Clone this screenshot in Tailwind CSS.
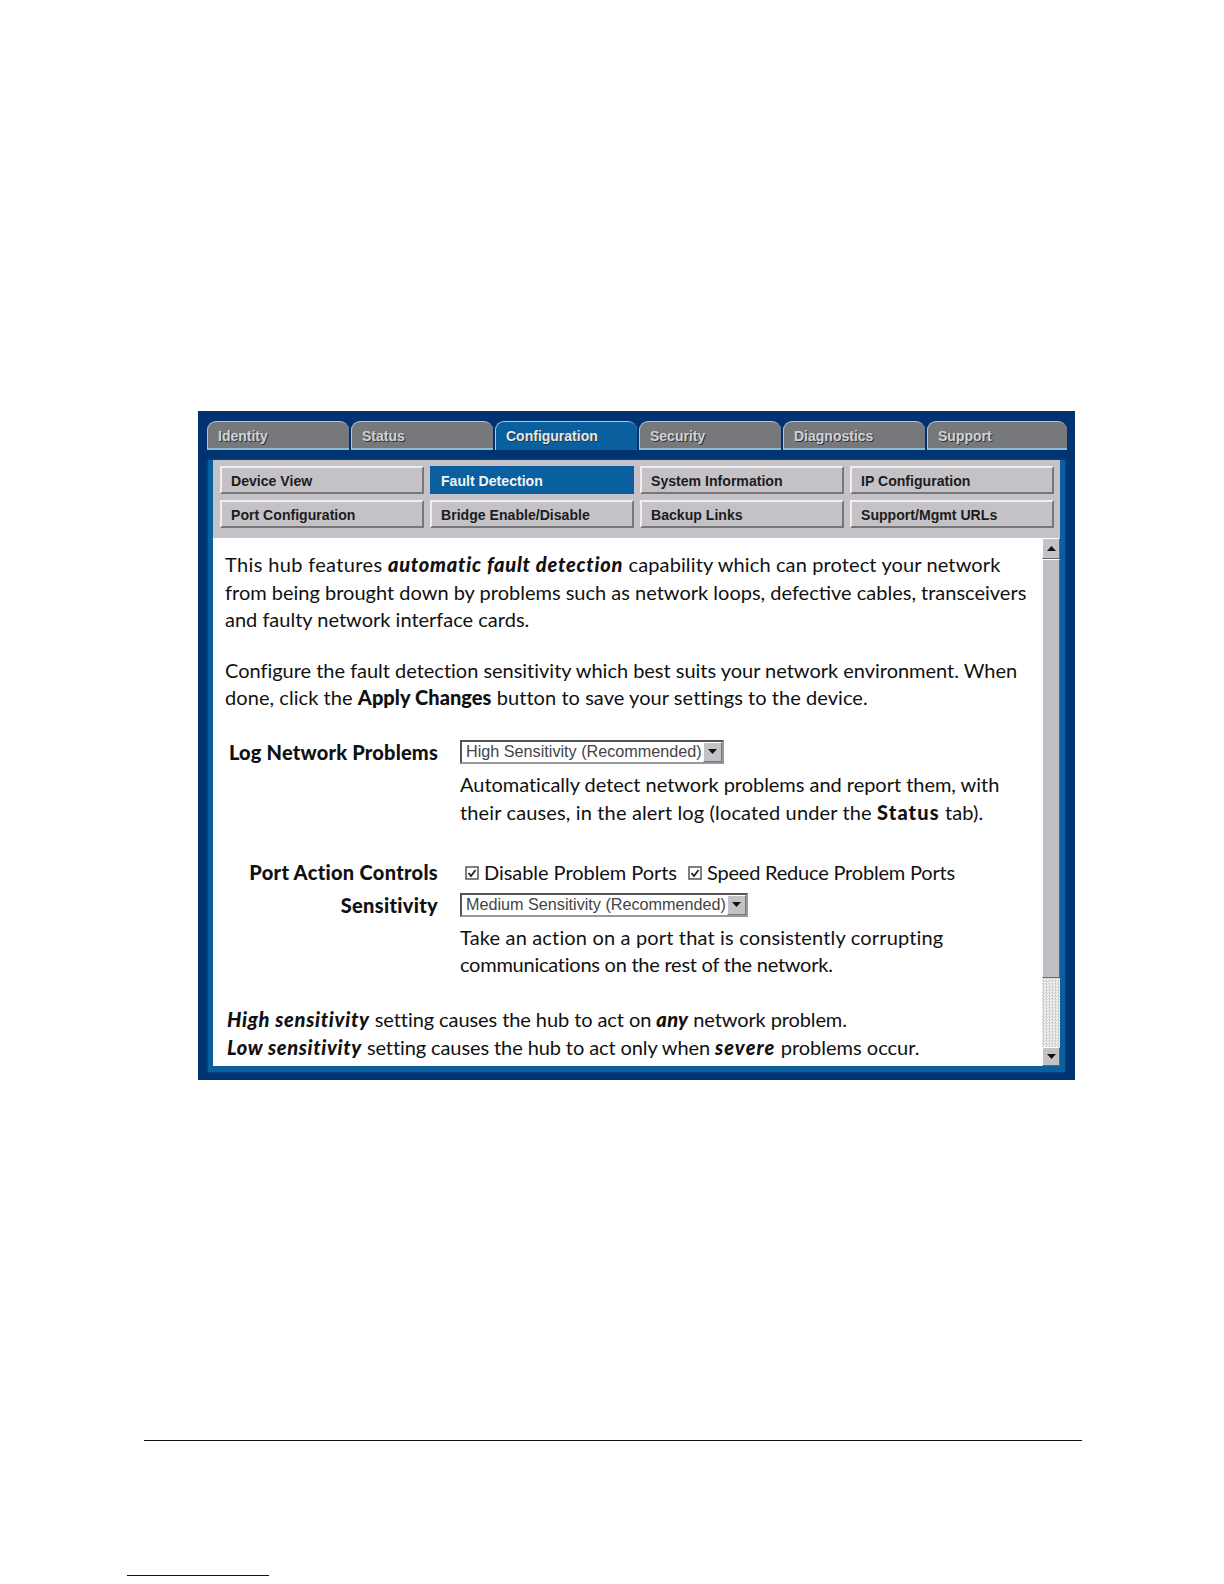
<!DOCTYPE html>
<html lang="en">
<head>
  <meta charset="UTF-8" />
  <title>Fault Detection</title>
  <script src="https://cdn.jsdelivr.net/npm/@tailwindcss/browser@4"></script>
</head>
<body class="bg-white h-[1584px] overflow-hidden pt-[411px] font-['Liberation_Sans',sans-serif]">
  <div class="ml-[198px] w-[877px] h-[669px] bg-[#003370] flex flex-col">
    <!-- tabs -->
    <div class="flex gap-[2px] mt-[10px] mb-[10px] ml-[9px] h-[29px] shrink-0 text-[14px] font-bold [text-shadow:1px_1px_0_#333]">
      <div class="w-[142px] rounded-t-[9px] bg-[#77787c] border-t border-l border-[#b8c4cc] pl-[10px] pt-[4px] text-[#cfd2d6] border-b-2 border-b-[#8fb8d2]">Identity</div>
      <div class="w-[142px] rounded-t-[9px] bg-[#77787c] border-t border-l border-[#b8c4cc] pl-[10px] pt-[4px] text-[#cfd2d6] border-b-2 border-b-[#8fb8d2]">Status</div>
      <div class="w-[142px] rounded-t-[9px] bg-[#0a5f9e] border-t border-l border-[#a8cde0] pl-[10px] pt-[4px] text-[#e4e8ec]">Configuration</div>
      <div class="w-[142px] rounded-t-[9px] bg-[#77787c] border-t border-l border-[#b8c4cc] pl-[10px] pt-[4px] text-[#cfd2d6] border-b-2 border-b-[#8fb8d2]">Security</div>
      <div class="w-[142px] rounded-t-[9px] bg-[#77787c] border-t border-l border-[#b8c4cc] pl-[10px] pt-[4px] text-[#cfd2d6] border-b-2 border-b-[#8fb8d2]">Diagnostics</div>
      <div class="w-[140px] rounded-t-[9px] bg-[#77787c] border-t border-l border-[#b8c4cc] pl-[10px] pt-[4px] text-[#cfd2d6] border-b-2 border-b-[#8fb8d2]">Support</div>
    </div>
    <div class="flex-1 flex flex-col mx-[10px] mb-[8px] px-[5px] pb-[6px] bg-[#0a5f9e] shadow-[0_0_3px_#0a5f9e]">
      <!-- sub menu -->
      <div class="bg-[#c4c2c6] h-[78px] shrink-0 grid grid-cols-[204px_204px_204px_204px] gap-[6px] pt-[6px] pl-[7px] content-start text-[14.1px] font-bold text-[#1c1c1c]">
        <div class="h-[28px] border-2 border-t-[#f0eeee] border-l-[#f0eeee] border-b-[#77777a] border-r-[#77777a] pl-[9px] leading-[27px]">Device View</div>
        <div class="h-[28px] bg-[#0a5f9e] pl-[11px] leading-[31px] text-[#f2f4f6]">Fault Detection</div>
        <div class="h-[28px] border-2 border-t-[#f0eeee] border-l-[#f0eeee] border-b-[#77777a] border-r-[#77777a] pl-[9px] leading-[27px]">System Information</div>
        <div class="h-[28px] border-2 border-t-[#f0eeee] border-l-[#f0eeee] border-b-[#77777a] border-r-[#77777a] pl-[9px] leading-[27px]">IP Configuration</div>
        <div class="h-[28px] border-2 border-t-[#f0eeee] border-l-[#f0eeee] border-b-[#77777a] border-r-[#77777a] pl-[9px] leading-[27px]">Port Configuration</div>
        <div class="h-[28px] border-2 border-t-[#f0eeee] border-l-[#f0eeee] border-b-[#77777a] border-r-[#77777a] pl-[9px] leading-[27px]">Bridge Enable/Disable</div>
        <div class="h-[28px] border-2 border-t-[#f0eeee] border-l-[#f0eeee] border-b-[#77777a] border-r-[#77777a] pl-[9px] leading-[27px]">Backup Links</div>
        <div class="h-[28px] border-2 border-t-[#f0eeee] border-l-[#f0eeee] border-b-[#77777a] border-r-[#77777a] pl-[9px] leading-[27px]">Support/Mgmt URLs</div>
      </div>
      <!-- content and scrollbar -->
      <div class="flex-1 flex bg-white">
        <div class="w-[829px] shrink-0 pt-[13px] font-['Lato',sans-serif] text-[20px] leading-[27.6px] text-[#111] whitespace-nowrap">
          <p class="pl-[12px]"><span class="tracking-[0.35px]">This hub features </span><b class="italic font-black tracking-[0.77px]">automatic fault detection</b><span class="tracking-[0.12px]"> capability which can protect your network</span><br>from being brought down by problems such as network loops, defective cables, transceivers<br>and faulty network interface cards.</p>
          <p class="pl-[12px] mt-[23px]"><span class="tracking-[-0.02px]">Configure the fault detection sensitivity which best suits your network environment. When</span><br><span class="tracking-[0.06px]">done, click the <b class="font-black">Apply Changes</b> button to save your settings to the device.</span></p>
          <div class="grid grid-cols-[225px_1fr] gap-x-[22px] mt-[27px]">
            <div class="text-right font-black tracking-[0.2px]">Log Network Problems</div>
            <div>
              <div class="w-[264px] h-[24px] mt-[1px] flex items-center justify-between border-2 border-[#999] border-t-[#555] border-l-[#555] pl-[4px] font-['Liberation_Sans',sans-serif] text-[16.2px] text-[#444]">
                <span>High Sensitivity (Recommended)</span>
                <span class="w-[19px] h-[20px] shrink-0 bg-[#c4c2c6] border border-[#777] border-t-white border-l-white flex items-center justify-center"><svg width="9" height="5" viewBox="0 0 9 5"><path d="M0 0h9L4.500 5z" fill="#111"/></svg></span>
              </div>
              <p class="mt-[7px]"><span class="tracking-[-0.03px]">Automatically detect network problems and report them, with</span><br><span class="tracking-[0.14px]">their causes, in the alert log (located under the <b class="font-black tracking-[1.1px]">Status</b> tab).</span></p>
            </div>
            <div class="text-right font-black tracking-[0.3px] mt-[33px]">Port Action Controls</div>
            <div class="mt-[33px] flex items-center h-[27.6px]">
              <svg class="ml-[5px] mr-[5px]" width="14" height="14" viewBox="0 0 14 14"><rect x="1" y="1" width="12" height="12" fill="#fff" stroke="#555" stroke-width="1.5"/><path d="M3.500 7l2.500 3 4.500-6" fill="none" stroke="#222" stroke-width="1.8"/></svg>
              <span class="tracking-[-0.05px]">Disable Problem Ports</span>
              <svg class="ml-[11px] mr-[5px]" width="14" height="14" viewBox="0 0 14 14"><rect x="1" y="1" width="12" height="12" fill="#fff" stroke="#555" stroke-width="1.5"/><path d="M3.500 7l2.500 3 4.500-6" fill="none" stroke="#222" stroke-width="1.8"/></svg>
              <span class="tracking-[-0.2px]">Speed Reduce Problem Ports</span>
            </div>
            <div class="text-right font-black tracking-[0.3px] mt-[5px]">Sensitivity</div>
            <div class="mt-[6px]">
              <div class="w-[288px] h-[24px] flex items-center justify-between border-2 border-[#999] border-t-[#555] border-l-[#555] pl-[4px] font-['Liberation_Sans',sans-serif] text-[16.2px] text-[#444]">
                <span>Medium Sensitivity (Recommended)</span>
                <span class="w-[19px] h-[20px] shrink-0 bg-[#c4c2c6] border border-[#777] border-t-white border-l-white flex items-center justify-center"><svg width="9" height="5" viewBox="0 0 9 5"><path d="M0 0h9L4.500 5z" fill="#111"/></svg></span>
              </div>
              <p class="mt-[7px]"><span class="tracking-[0.16px]">Take an action on a port that is consistently corrupting</span><br><span class="tracking-[-0.25px]">communications on the rest of the network.</span></p>
            </div>
          </div>
          <p class="pl-[14px] mt-[27px]"><b class="italic font-black tracking-[0.7px]">High sensitivity</b><span class="tracking-[-0.08px]"> setting causes the hub to act on </span><b class="italic font-black tracking-[0.3px]">any</b><span class="tracking-[-0.12px]"> network problem.</span><br><b class="italic font-black tracking-[0.65px]">Low sensitivity</b><span class="tracking-[-0.1px]"> setting causes the hub to act only when </span><b class="italic font-black tracking-[1.1px]">severe</b> problems occur.</p>
        </div>
        <!-- scrollbar -->
        <div class="w-[18px] flex flex-col">
          <div class="h-[21px] bg-[#c4c2c6] border border-[#666] border-t-white border-l-white flex items-center justify-center"><svg width="9" height="5" viewBox="0 0 9 5"><path d="M0 5h9L4.500 0z" fill="#111"/></svg></div>
          <div class="h-[419px] bg-[#c0bec2] border border-[#666] border-t-white border-l-white"></div>
          <div class="flex-1 bg-[repeating-conic-gradient(#d0d0d0_0_25%,#f4f4f4_0_50%)] bg-[length:3px_3px]"></div>
          <div class="h-[19px] bg-[#c4c2c6] border border-[#666] border-t-white border-l-white flex items-center justify-center"><svg width="9" height="5" viewBox="0 0 9 5"><path d="M0 0h9L4.500 5z" fill="#111"/></svg></div>
        </div>
      </div>
    </div>
  </div>
  <div class="ml-[144px] w-[938px] h-px bg-[#111] mt-[360px]"></div>
  <div class="ml-[127px] w-[142px] h-px bg-[#00009c] mt-[134px]"></div>
</body>
</html>
